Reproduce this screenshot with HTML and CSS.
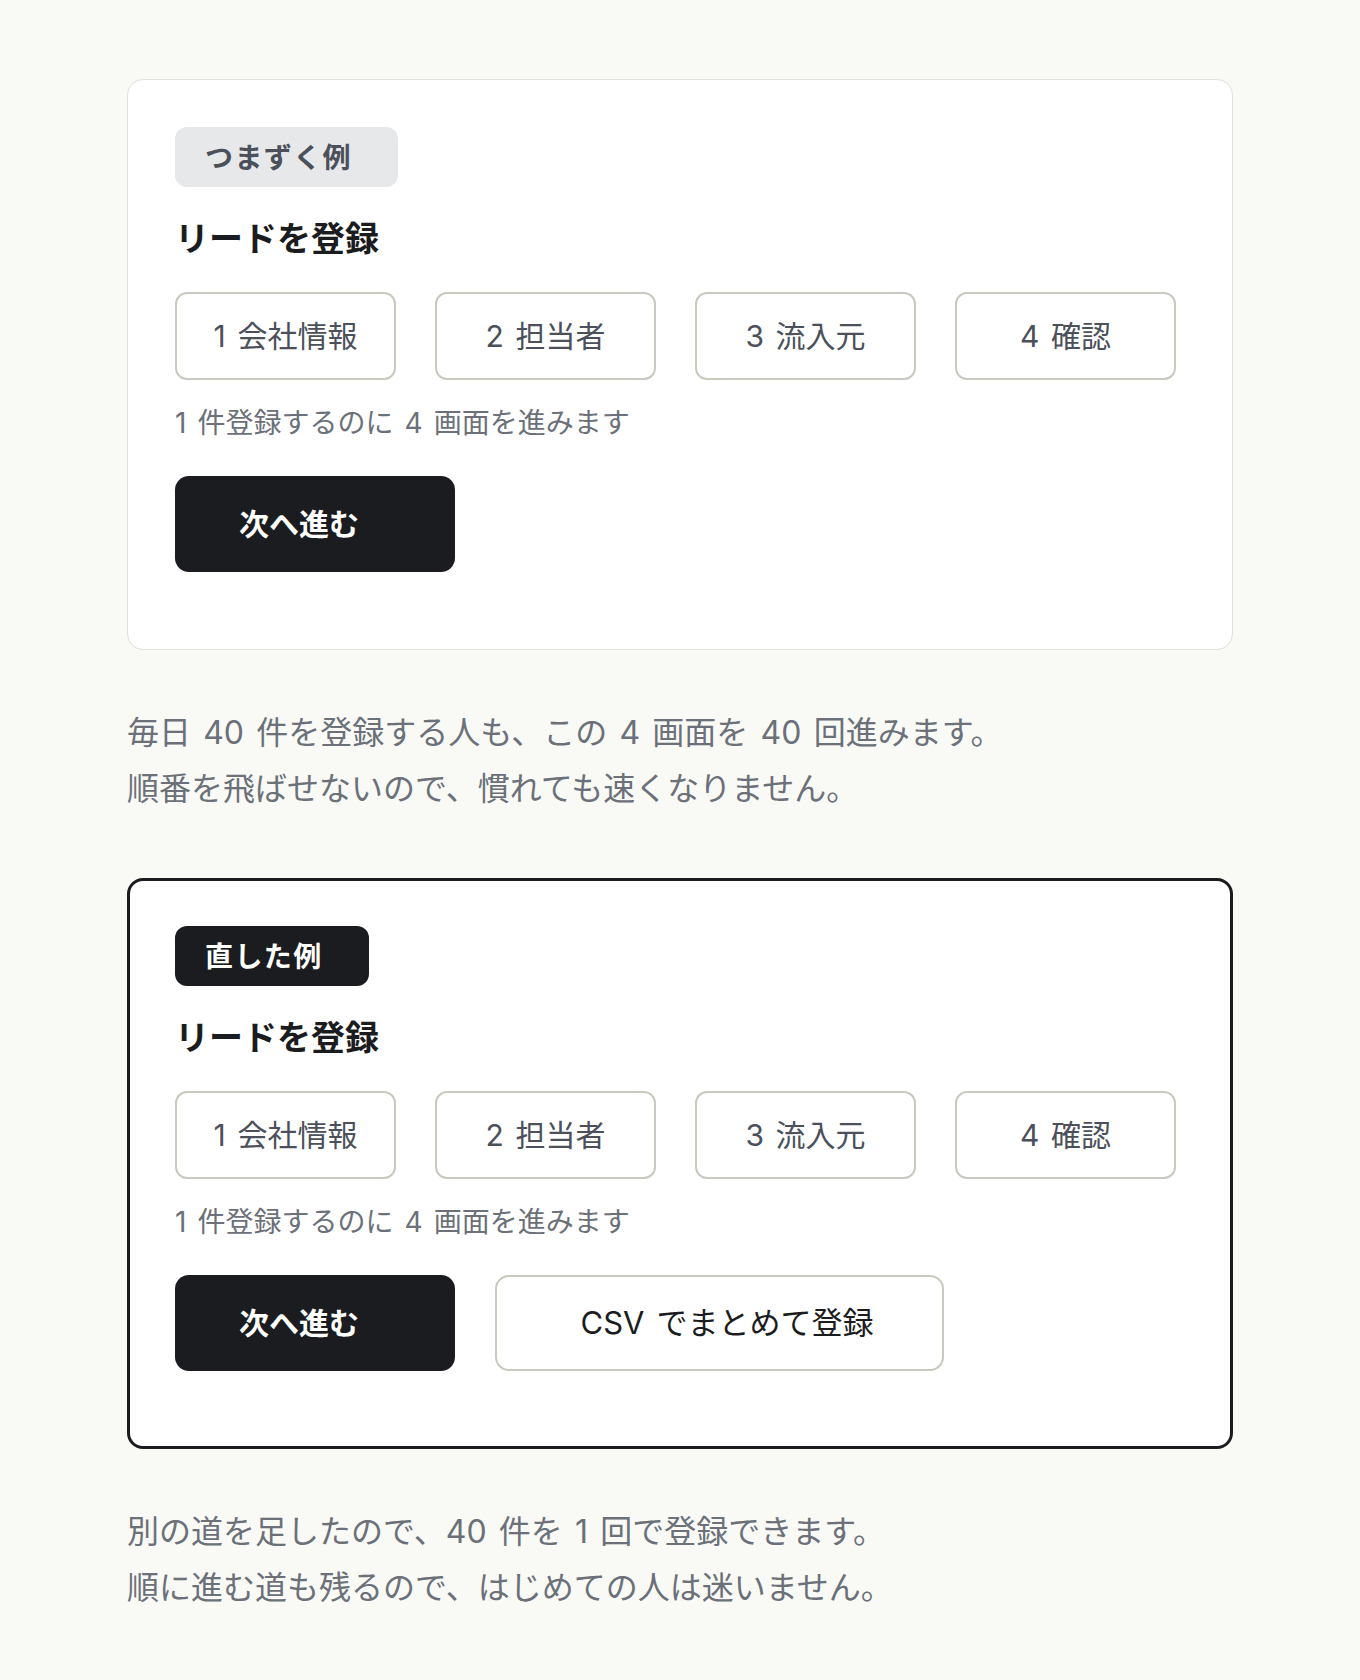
FILE: index.html
```html
<!DOCTYPE html>
<html lang="ja">
<head>
    <meta charset="UTF-8">
    <meta name="viewport" content="width=device-width, initial-scale=1.0">
    <title>リードを登録</title>
    <link rel="stylesheet" href="styles.css">
</head>
<body>

    <main class="page">

        <!-- つまずく例 -->
        <section class="demo">
            <span class="tag">つまずく例</span>
            <h2 class="demo-title">リードを登録</h2>
            <ol class="steps">
                <li class="step">1 会社情報</li>
                <li class="step">2 担当者</li>
                <li class="step">3 流入元</li>
                <li class="step">4 確認</li>
            </ol>
            <p class="hint">1 件登録するのに 4 画面を進みます</p>
            <div class="actions">
                <button class="btn btn-primary">次へ進む</button>
            </div>
        </section>

        <p class="note">
            毎日 40 件を登録する人も、この 4 画面を 40 回進みます。<br>
            順番を飛ばせないので、慣れても速くなりません。
        </p>

        <!-- 直した例 -->
        <section class="demo demo-fixed">
            <span class="tag tag-dark">直した例</span>
            <h2 class="demo-title">リードを登録</h2>
            <ol class="steps">
                <li class="step">1 会社情報</li>
                <li class="step">2 担当者</li>
                <li class="step">3 流入元</li>
                <li class="step">4 確認</li>
            </ol>
            <p class="hint">1 件登録するのに 4 画面を進みます</p>
            <div class="actions">
                <button class="btn btn-primary">次へ進む</button>
                <button class="btn btn-outline">CSV でまとめて登録</button>
            </div>
        </section>

        <p class="note">
            別の道を足したので、40 件を 1 回で登録できます。<br>
            順に進む道も残るので、はじめての人は迷いません。
        </p>

    </main>

</body>
</html>
```

FILE: styles.css
```css
body {
    margin: 0;
    background-color: rgb(249, 250, 246);
    font-family: Inter, "Noto Sans CJK JP", sans-serif;
    word-spacing: 0.2em;
    color: rgb(27, 28, 32);
}

.page {
    width: 1106px;
    margin-left: 127px;
    padding-top: 79px;
    padding-bottom: 60px;
}

.demo {
    background-color: rgb(255, 255, 255);
    border: 1px solid rgb(226, 226, 218);
    border-radius: 16px;
    padding: 47px 47px 77px;
}

.demo-fixed {
    border: 3px solid rgb(27, 28, 32);
    padding: 45px 45px 75px;
}

.tag {
    display: inline-block;
    box-sizing: border-box;
    height: 60px;
    padding: 3px 46px 0 30px;
    line-height: 57px;
    border-radius: 12px;
    background-color: rgb(231, 232, 234);
    color: rgb(75, 80, 90);
    font-size: 28px;
    font-weight: 700;
    letter-spacing: 0.05em;
}

.tag-dark {
    background-color: rgb(27, 28, 32);
    color: rgb(255, 255, 255);
}

.demo-title {
    margin: 29px 0 0;
    font-size: 34px;
    line-height: 46px;
    font-weight: 700;
    color: rgb(27, 28, 32);
}

.steps {
    list-style: none;
    margin: 30px 0 0;
    padding: 0;
    display: flex;
    gap: 39px;
}

.step {
    width: 221px;
    height: 88px;
    box-sizing: border-box;
    border: 2px solid rgb(201, 201, 191);
    border-radius: 12px;
    display: flex;
    justify-content: center;
    align-items: center;
    font-size: 30px;
    line-height: 40px;
    color: rgb(75, 80, 90);
}

.hint {
    margin: 23px 0 0;
    font-size: 28px;
    line-height: 40px;
    color: rgb(107, 112, 121);
}

.actions {
    display: flex;
    gap: 40px;
    margin-top: 33px;
}

.btn {
    height: 96px;
    box-sizing: border-box;
    border-radius: 14px;
    font-family: inherit;
    font-size: 30px;
    line-height: 40px;
    word-spacing: inherit;
    cursor: pointer;
}

.btn-primary {
    width: 280px;
    padding: 0 0 0 64px;
    text-align: left;
    border: none;
    background-color: rgb(27, 28, 32);
    color: rgb(255, 255, 255);
    font-weight: 700;
}

.btn-outline {
    width: 449px;
    padding: 0 0 0 15px;
    border: 2px solid rgb(201, 201, 191);
    background-color: rgb(255, 255, 255);
    color: rgb(27, 28, 32);
    font-size: 31px;
}

.note {
    margin: 55px 0 61px;
    font-size: 32px;
    line-height: 56px;
    color: rgb(107, 112, 121);
}
```
